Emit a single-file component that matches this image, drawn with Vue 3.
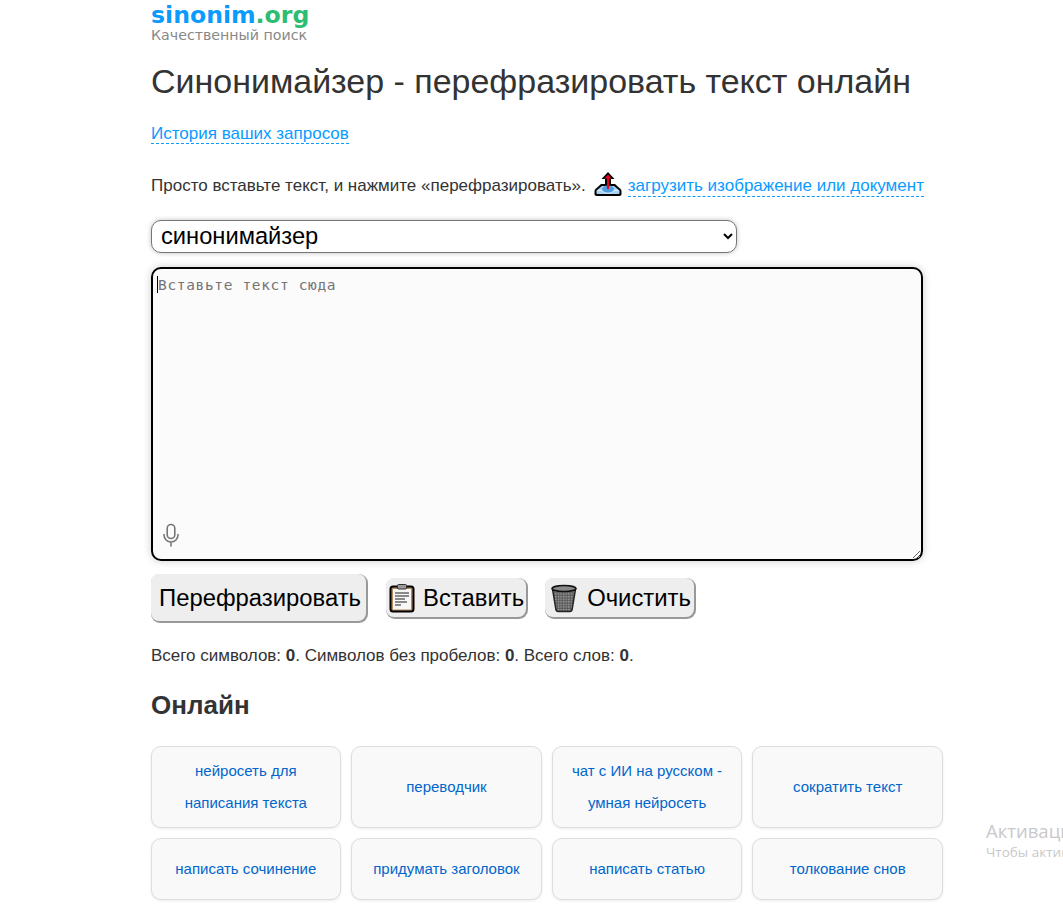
<script setup>
const row1 = [
  ['нейросеть для написания текста'],
  ['переводчик'],
  ['чат с ИИ на русском - умная нейросеть'],
  ['сократить текст'],
]
const row2 = ['написать сочинение', 'придумать заголовок', 'написать статью', 'толкование снов']
</script>

<template>
  <div class="page">
    <main class="wrap">
      <header class="logo">
        <div class="logo-name"><span class="blue">sinonim</span><span class="green">.org</span></div>
        <div class="logo-sub">Качественный поиск</div>
      </header>
      <h1>Синонимайзер - перефразировать текст онлайн</h1>
      <p class="history"><a class="dash">История ваших запросов</a></p>
      <p class="intro">
        <span>Просто вставьте текст, и нажмите «перефразировать».</span>
        <svg class="upload" width="30" height="26" viewBox="0 0 30 26">
          <path d="M8 13 H22 L27.5 18 Q28.5 19 28.5 20 V23 Q28.5 25 26.5 25 H3.5 Q1.5 25 1.5 23 V20 Q1.5 19 2.5 18 Z" fill="#000"/>
          <path d="M9 15 H21 L26.5 19.5 V22 Q26.5 23 25.5 23 H4.5 Q3.5 23 3.5 22 V19.5 Z" fill="#a9d3f2"/>
          <path d="M5 19.5 H9 Q11 22.5 15 22.5 Q19 22.5 21 19.5 H25" fill="none" stroke="#d8ecfa" stroke-width="1"/>
          <ellipse cx="15" cy="18" rx="6" ry="3.5" fill="#4f9bdc"/>
          <path d="M15 1 L21.5 8 H18 V13 H12 V8 H8.5 Z" fill="#000"/>
          <path d="M15 3.5 L18.6 7.5 H16 V18 H14 V7.5 H11.4 Z" fill="#e8001c"/>
        </svg>
        <a class="dash">загрузить изображение или документ</a>
      </p>
      <select class="mode">
        <option>синонимайзер</option>
      </select>
      <div class="editor">
        <textarea class="text" placeholder="Вставьте текст сюда"></textarea>
        <span class="caret"></span>
        <svg class="mic" width="18" height="24" viewBox="0 0 18 24" fill="none" stroke="#777" stroke-width="1.6">
          <rect x="5.2" y="1.5" width="7.6" height="14" rx="3.8"/>
          <path d="M2 11.5 V12 A7 7 0 0 0 16 12 V11.5 M9 19 V23" stroke-linecap="round"/>
        </svg>
      </div>
      <div class="actions">
        <button class="btn main">Перефразировать</button>
        <button class="btn">
          <svg width="28" height="30" viewBox="0 0 28 30">
            <rect x="2.5" y="3.5" width="23" height="25" rx="2.5" fill="#b38a5e" stroke="#000" stroke-width="2"/>
            <rect x="5" y="6" width="18" height="20.5" fill="#f7f7f5"/>
            <rect x="9.5" y="1.5" width="9" height="4.5" rx="1" fill="#999" stroke="#333"/>
            <path d="M7 10 H21 M7 13 H21 M7 16 H17 M7 19 H19 M7 22 H13" stroke="#666" stroke-width="1.4"/>
          </svg>
          <span>Вставить</span>
        </button>
        <button class="btn clear">
          <svg width="28" height="30" viewBox="0 0 28 30">
            <defs>
              <pattern id="mesh" width="2.6" height="2.6" patternUnits="userSpaceOnUse">
                <rect width="2.6" height="2.6" fill="#5c5c5c"/>
                <rect width="1.3" height="1.3" fill="#a8a8a8"/>
              </pattern>
            </defs>
            <path d="M2.5 6 L6 27 Q6.5 28.5 8 28.5 H20 Q21.5 28.5 22 27 L25.5 6 Z" fill="url(#mesh)" stroke="#222" stroke-width="1.5"/>
            <ellipse cx="14" cy="5.5" rx="12" ry="3" fill="#8a8a8a" stroke="#111" stroke-width="1.6"/>
          </svg>
          <span>Очистить</span>
        </button>
      </div>
      <p class="stats">Всего символов: <b>0</b>. Символов без пробелов: <b>0</b>. Всего слов: <b>0</b>.</p>
      <h2>Онлайн</h2>
      <div class="grid tall">
        <a v-for="c in row1" :key="c[0]" class="card">{{ c[0] }}</a>
      </div>
      <div class="grid">
        <a v-for="c in row2" :key="c" class="card">{{ c }}</a>
      </div>
    </main>
    <aside class="activate">
      <div class="a1">Активация Windows</div>
      <div class="a2">Чтобы активировать Windows</div>
    </aside>
  </div>
</template>

<style scoped>
.page {
  position: relative;
  height: 904px;
  overflow: hidden;
  background: #fff;
  font-family: "Liberation Sans", Arial, sans-serif;
  color: #333;
}
.wrap {
  width: 792px;
  margin-left: 151px;
}
.logo {
  font-family: "DejaVu Sans", Verdana, sans-serif;
  padding-top: 2px;
}
.logo-name {
  font-size: 23.6px;
  font-weight: 700;
  line-height: 26px;
}
.blue { color: #0a9bff; }
.green { color: #2dbd72; }
.logo-sub {
  font-size: 14.2px;
  line-height: 15px;
  color: #888;
}
h1 {
  margin: 19px 0 0;
  font-size: 33.98px;
  line-height: 38px;
  font-weight: 400;
  color: #333;
}
.history {
  margin: 24px 0 0;
  font-size: 17px;
  line-height: 20px;
}
.dash {
  color: #0a9bff;
  border-bottom: 1px dashed #0a9bff;
  cursor: pointer;
}
.intro {
  display: flex;
  align-items: center;
  margin: 28px 0 0;
  height: 28px;
  font-size: 17px;
}
.upload {
  margin: -4px 5px 0 7px;
}
.mode {
  display: block;
  width: 586px;
  height: 33px;
  margin-top: 20px;
  padding: 0 5px 2px;
  border: 1px solid #767676;
  border-radius: 10px;
  background: #fff;
  box-shadow: 0 0 5px rgba(0, 0, 0, 0.25);
  font-family: "Liberation Sans", Arial, sans-serif;
  font-size: 23.7px;
  color: #000;
}
.editor {
  position: relative;
  width: 772px;
  height: 294px;
  margin-top: 14px;
}
.text {
  display: block;
  box-sizing: border-box;
  width: 100%;
  height: 100%;
  padding: 7px 5px;
  border: 2px solid #000;
  border-radius: 10px;
  outline: none;
  background: #fbfbfb;
  box-shadow: 0 0 8px rgba(0, 0, 0, 0.2);
  font-family: "DejaVu Sans Mono", monospace;
  font-size: 14.5px;
  letter-spacing: 0.65px;
  line-height: 18px;
}
.text::placeholder {
  color: #757575;
}
.caret {
  position: absolute;
  left: 6px;
  top: 9px;
  width: 1px;
  height: 17px;
  background: #000;
}
.mic {
  position: absolute;
  left: 11px;
  top: 256px;
}
.actions {
  display: flex;
  align-items: center;
  gap: 19px;
  margin-top: 13px;
}
.btn {
  display: inline-flex;
  align-items: center;
  gap: 7px;
  height: 39px;
  padding: 0 2px 0 2px;
  border: 0;
  border-radius: 8px;
  background: #eee;
  box-shadow: 1px 1px 0 1px #999;
  font-family: "Liberation Sans", Arial, sans-serif;
  font-size: 23.85px;
  color: #000;
  white-space: nowrap;
}
.btn.main {
  height: 47px;
  padding: 0 5px 0 8px;
  margin-right: 1px;
}
.btn.clear {
  gap: 9px;
  padding: 0 3px 0 5px;
}
.stats {
  margin: 25px 0 0;
  font-size: 17px;
  letter-spacing: -0.01px;
  line-height: 20px;
  color: #333;
}
h2 {
  margin: 24px 0 0;
  font-size: 26px;
  line-height: 30px;
  color: #333;
}
.grid {
  display: grid;
  grid-template-columns: repeat(4, 1fr);
  gap: 10px;
  width: 792.5px;
  margin-top: 10px;
  margin-left: -0.5px;
}
.grid.tall {
  margin-top: 26px;
}
.card {
  box-sizing: border-box;
  display: flex;
  align-items: center;
  justify-content: center;
  height: 62px;
  padding: 0 15px;
  border: 1px solid #ddd;
  border-radius: 10px;
  background: #f9f9f9;
  box-shadow: 0 1px 3px rgba(0, 0, 0, 0.08);
  color: #0066cc;
  font-size: 15px;
  line-height: 32px;
  text-align: center;
}
.grid.tall .card {
  height: 82px;
}
.activate {
  position: absolute;
  left: 986px;
  top: 820px;
  white-space: nowrap;
  font-family: "Open Sans", sans-serif;
  color: #c9c9c9;
}
.a1 { font-size: 18.5px; line-height: 22px; }
.a2 { font-size: 13.5px; line-height: 20px; }
</style>
